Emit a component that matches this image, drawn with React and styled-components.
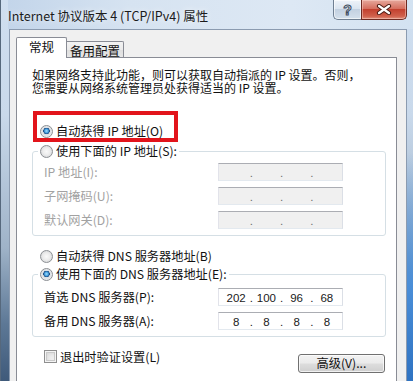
import React from 'react'
import styled, { createGlobalStyle, css } from 'styled-components'

const cjk = `"Noto Sans CJK SC", "Noto Sans", sans-serif`

const GlobalStyle = createGlobalStyle`
  html, body {
    margin: 0;
    padding: 0;
    background: #dbe6f2;
  }
  * {
    box-sizing: border-box;
  }
`

const App = () => {
  return (
    <>
      <GlobalStyle />
      <Window>
        <TitleBar>
          <Title>Internet 协议版本 4 (TCP/IPv4) 属性</Title>
          <CaptionButtons>
            <HelpButton>?</HelpButton>
            <CloseButton>
              <svg width="16" height="11" viewBox="0 0 16 11">
                <path d="M3 2 L13 9 M13 2 L3 9" stroke="#4a1a12" strokeWidth="4.2" strokeLinecap="round" />
                <path d="M3 2 L13 9 M13 2 L3 9" stroke="#fff" strokeWidth="2.2" strokeLinecap="round" />
              </svg>
            </CloseButton>
          </CaptionButtons>
        </TitleBar>

        <Body>
          <TabStrip>
            <Tab $active>常规</Tab>
            <Tab>备用配置</Tab>
          </TabStrip>

          <Panel>
            <Intro>
              <IntroLine>如果网络支持此功能，则可以获取自动指派的 IP 设置。否则，</IntroLine>
              <IntroLine>您需要从网络系统管理员处获得适当的 IP 设置。</IntroLine>
            </Intro>

            <Highlight>
              <Option checked>自动获得 IP 地址(O)</Option>
            </Highlight>

            <Group $top={2} $padTop={5}>
              <Legend>
                <Option>使用下面的 IP 地址(S):</Option>
              </Legend>
              <FieldRow>
                <FieldLabel $disabled>IP 地址(I):</FieldLabel>
                <IpField disabled />
              </FieldRow>
              <FieldRow>
                <FieldLabel $disabled>子网掩码(U):</FieldLabel>
                <IpField disabled />
              </FieldRow>
              <FieldRow>
                <FieldLabel $disabled>默认网关(D):</FieldLabel>
                <IpField disabled />
              </FieldRow>
            </Group>

            <OptionLine>
              <Option>自动获得 DNS 服务器地址(B)</Option>
            </OptionLine>

            <Group $top={4} $padTop={7}>
              <Legend>
                <Option checked>使用下面的 DNS 服务器地址(E):</Option>
              </Legend>
              <FieldRow>
                <FieldLabel>首选 DNS 服务器(P):</FieldLabel>
                <IpField octets={['202', '100', '96', '68']} />
              </FieldRow>
              <FieldRow>
                <FieldLabel>备用 DNS 服务器(A):</FieldLabel>
                <IpField octets={['8', '8', '8', '8']} />
              </FieldRow>
            </Group>

            <Footer>
              <CheckLine>
                <CheckBox />
                <span>退出时验证设置(L)</span>
              </CheckLine>
              <PushButton type="button">高级(V)...</PushButton>
            </Footer>
          </Panel>
        </Body>
      </Window>
    </>
  )
}

const Option = ({ checked, children }) => (
  <OptionRow>
    <RadioDot $checked={checked} />
    <span>{children}</span>
  </OptionRow>
)

const IpField = ({ octets = ['', '', '', ''], disabled }) => (
  <IpBox $disabled={disabled}>
    {octets.map((o, i) => (
      <React.Fragment key={i}>
        {i > 0 && <IpDot $disabled={disabled}>.</IpDot>}
        <Octet>{o}</Octet>
      </React.Fragment>
    ))}
  </IpBox>
)

const Window = styled.div`
  width: 413px;
  height: 381px;
  overflow: hidden;
  display: flex;
  flex-direction: column;
  padding: 0 6px 0 8px;
  border-left: 1px solid #56687c;
  background:
    linear-gradient(180deg, rgba(60, 130, 210, 0) 0%, rgba(60, 130, 210, 0) 40%, #4a8ed8 75%, #2f73c2 100%) right / 6px 100% no-repeat,
    linear-gradient(180deg, #d0dff0 0%, #c9d9eb 30%, #9fb3c8 65%, #5d7896 85%, #3f5a7a 100%);
`

const TitleBar = styled.div`
  height: 29px;
  flex: none;
  display: flex;
  align-items: flex-start;
  margin-left: -1px;
  background: linear-gradient(90deg, #c3d5ea 0%, #d6e3f1 30%, #dde8f4 70%, #d3e2f1 100%);
  margin-right: -6px;
  padding-right: 6px;
`

const Title = styled.div`
  font-family: ${cjk};
  font-size: 12.5px;
  line-height: 15px;
  color: #1b1b1b;
  margin-top: 8px;
  white-space: nowrap;
  text-shadow: 0 0 6px rgba(255, 255, 255, 0.9);
`

const CaptionButtons = styled.div`
  margin-left: auto;
  display: flex;
`

const captionButton = css`
  height: 20px;
  display: flex;
  align-items: center;
  justify-content: center;
  border: 1px solid #6f7f92;
  border-top: none;
`

const HelpButton = styled.div`
  ${captionButton}
  width: 28px;
  border-right: none;
  border-bottom-left-radius: 5px;
  background: linear-gradient(180deg, #eef3f9 0%, #dbe5f0 45%, #c3d1e1 50%, #d4e0ec 100%);
  box-shadow: inset 0 0 0 1px rgba(255, 255, 255, 0.6);
  font-family: "Liberation Sans", sans-serif;
  font-weight: bold;
  font-size: 14px;
  color: #eef3f8;
  -webkit-text-stroke: 1px #3d4c5e;
`

const CloseButton = styled.div`
  ${captionButton}
  width: 46px;
  border-color: #6e2a22;
  border-bottom-right-radius: 5px;
  background: linear-gradient(180deg, #e6a89c 0%, #d66f5f 45%, #c3412f 50%, #d0604c 85%, #e0907c 100%);
  box-shadow: inset 0 0 0 1px rgba(255, 220, 210, 0.45);
`

const Body = styled.div`
  flex: 1;
  min-height: 0;
  overflow: hidden;
  display: flex;
  flex-direction: column;
  background: #f0f0f0;
  border: 1px solid #8b9bb0;
  border-bottom: none;
  padding: 7px 9px 0 6px;
  font-family: ${cjk};
  font-size: 12.2px;
  color: #111;
`

const TabStrip = styled.div`
  display: flex;
  align-items: flex-end;
  height: 20px;
  flex: none;
  font-size: 12.5px;
`

const Tab = styled.div`
  position: relative;
  display: flex;
  align-items: center;
  justify-content: center;
  border: 1px solid #898c95;
  line-height: 14px;
  white-space: nowrap;
  ${(p) =>
    p.$active
      ? css`
          z-index: 1;
          width: 51px;
          height: 21px;
          margin-bottom: -1px;
          border-bottom: none;
          background: #fff;
          padding-bottom: 2px;
          border-radius: 2px 2px 0 0;
        `
      : css`
          width: 57px;
          height: 16px;
          border-left: none;
          border-bottom: none;
          background: linear-gradient(180deg, #f3f3f3 0%, #ebebeb 50%, #dedede 51%, #e6e6e6 100%);
          border-radius: 0 2px 0 0;
          padding-top: 2px;
        `}
`

const Panel = styled.div`
  flex: none;
  background: #fff;
  border: 1px solid #898c95;
  padding: 10px 10px 30px 15px;
  display: flex;
  flex-direction: column;
  align-items: stretch;
`

const Intro = styled.div`
  display: flex;
  flex-direction: column;
  margin-bottom: -1px;
`

const IntroLine = styled.div`
  height: 13px;
  line-height: 13px;
  font-size: 12px;
  white-space: nowrap;
`

const Highlight = styled.div`
  align-self: flex-start;
  width: 145px;
  margin: 18px 0 0 1px;
  border: 4px solid #e2141b;
  padding: 9px 0 0 3px;
`

const OptionRow = styled.div`
  display: flex;
  align-items: center;
  gap: 3px;
  height: 14px;
  line-height: 14px;
  white-space: nowrap;
`

const RadioDot = styled.span`
  flex: none;
  width: 13px;
  height: 13px;
  border-radius: 50%;
  border: 1px solid #8c8f93;
  background: ${(p) =>
    p.$checked
      ? 'radial-gradient(circle at 50% 45%, #9fe0ff 0%, #4da3e0 22%, #1e5e9c 34%, #244f7e 38%, #d9dde2 42%, #f7f7f7 100%)'
      : 'radial-gradient(circle at 50% 50%, #f9f9f9 0%, #ececec 45%, #d6d8da 80%, #f3f3f3 100%)'};
`

const OptionLine = styled.div`
  margin: 13px 0 0 8px;
`

const Group = styled.fieldset`
  margin: ${(p) => p.$top}px 0 0 0;
  padding: ${(p) => p.$padTop}px 0 6px 0;
  border: 1px solid #d5dfe5;
  border-radius: 3px;
  display: flex;
  flex-direction: column;
  gap: 6px;
  min-width: 0;
`

const Legend = styled.legend`
  margin-left: 5px;
  padding: 0 2px;
`

const FieldRow = styled.div`
  display: grid;
  grid-template-columns: 174px 125px;
  align-items: center;
  height: 18px;
  margin-left: 11px;
`

const FieldLabel = styled.span`
  white-space: nowrap;
  line-height: 14px;
  color: ${(p) => (p.$disabled ? '#a2a2a2' : '#111')};
`

const IpBox = styled.div`
  height: 18px;
  display: flex;
  align-items: center;
  padding: 0 2px 0 4px;
  border: 1px solid;
  border-color: #abadb3 #dbdfe6 #e3e9ef #e2e3ea;
  background: ${(p) => (p.$disabled ? '#f0f0f0' : '#fff')};
  font-family: "Liberation Sans", sans-serif;
  font-size: 11.5px;
  color: #1a1a1a;
`

const Octet = styled.span`
  flex: 1;
  text-align: center;
  line-height: 16px;
  padding-top: 1px;
`

const IpDot = styled.span`
  width: 4px;
  text-align: center;
  line-height: 16px;
  padding-top: 1px;
  color: ${(p) => (p.$disabled ? '#6e6e6e' : '#1a1a1a')};
`

const Footer = styled.div`
  display: flex;
  align-items: flex-start;
  margin-top: 13px;
  padding-right: 1px;
`

const CheckLine = styled.div`
  display: flex;
  align-items: center;
  gap: 3px;
  margin-left: 12px;
  height: 13px;
  line-height: 14px;
  white-space: nowrap;
`

const CheckBox = styled.span`
  width: 13px;
  height: 13px;
  border: 1px solid #8f8f8f;
  background: #f4f4f4;
  box-shadow: inset 0 0 0 1px #f4f4f4, inset 0 0 0 2px #c9c9c9, inset 2px 2px 6px #cfcfcf;
`

const PushButton = styled.button`
  margin: 4px 0 0 auto;
  width: 87px;
  height: 19px;
  padding: 0;
  border: 1px solid #707070;
  border-radius: 3px;
  background: linear-gradient(180deg, #f2f2f2 0%, #ebebeb 48%, #dddddd 52%, #cfcfcf 100%);
  box-shadow: inset 0 0 0 1px rgba(255, 255, 255, 0.7);
  font-family: ${cjk};
  font-size: 12.2px;
  line-height: 15px;
  color: #111;
`

export default App
